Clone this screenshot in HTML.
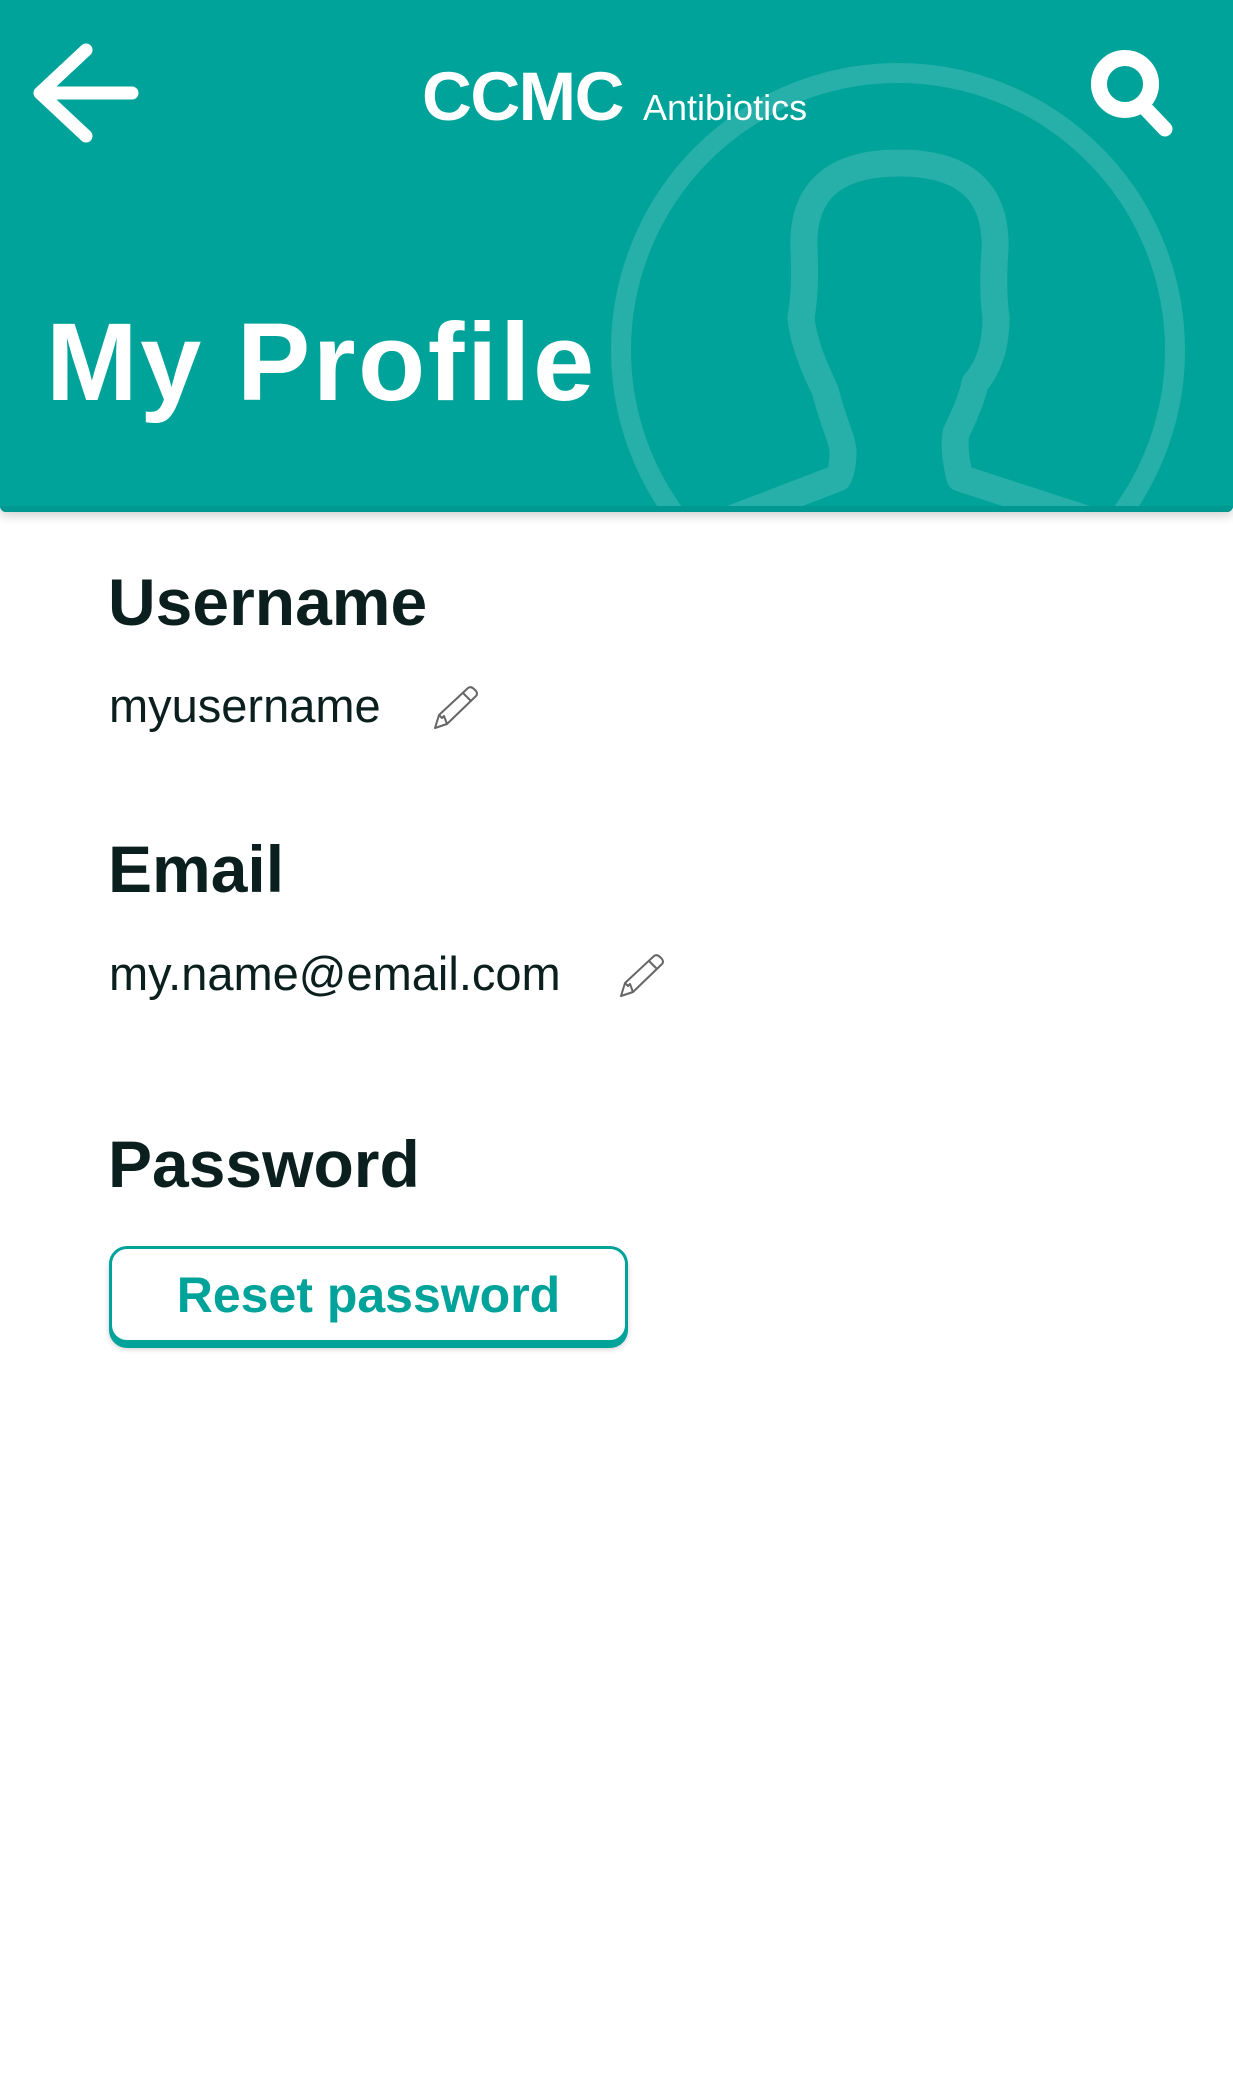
<!DOCTYPE html>
<html><head><meta charset="utf-8"><style>
html,body{margin:0;padding:0;background:#fff;width:1233px;height:2088px;overflow:hidden;font-family:"Liberation Sans",sans-serif;}
.hdr{position:absolute;left:0;top:0;width:1233px;height:512px;background:#00a39a;border-radius:0 0 6px 6px;box-shadow:0 4px 10px rgba(0,0,0,0.18);overflow:hidden;}
.hdr .strip{position:absolute;left:0;right:0;bottom:0;height:6px;background:#009890;}
.t{position:absolute;white-space:nowrap;}
.dark{color:#0b1f1f;}
</style></head><body>
<div class="hdr">
<svg width="1233" height="512" style="position:absolute;left:0;top:0">
<circle cx="898" cy="350" r="277" fill="none" stroke="rgba(255,255,255,0.15)" stroke-width="20"/>
<path d="M715 525 L838 478 Q843 470 843 450 L841 440 Q830 410 825 390 Q803 345 801 317 Q806 290 804 250 Q800 163 899 163 Q998 163 995 250 Q992 290 996 317 Q996 360 975 383 Q972 400 956 433 Q953 450 960 478 L1105 525" fill="none" stroke="rgba(255,255,255,0.15)" stroke-width="27" stroke-linejoin="round"/>
<path d="M86 50 L40 93 L86 136 M42 93 L132 93" fill="none" stroke="#fff" stroke-width="13" stroke-linecap="round" stroke-linejoin="round"/>
<circle cx="1125" cy="84" r="26" fill="none" stroke="#fff" stroke-width="16"/>
<path d="M1145 108 L1165 129" stroke="#fff" stroke-width="15" stroke-linecap="round"/>
</svg>
<div class="strip"></div>
<div class="t" style="left:422px;top:52px;font-size:69px;font-weight:bold;color:#fff;letter-spacing:-1.5px;line-height:90px">CCMC</div>
<div class="t" style="left:643px;top:84px;font-size:36px;color:#fff;line-height:48px;font-weight:300">Antibiotics</div>
<div class="t" style="left:46px;top:298px;font-size:110px;font-weight:bold;color:#fff;letter-spacing:2.5px;line-height:130px">My Profile</div>
</div>

<div class="t dark" style="left:108px;top:562px;font-size:66px;font-weight:bold;line-height:80px">Username</div>
<div class="t dark" style="left:109px;top:678px;font-size:47px;line-height:56px">myusername</div>
<svg class="t" style="left:430px;top:682px" width="50" height="50" viewBox="0 0 50 50"><path d="M5 46 L9 33 L38 6 Q41 4 44 7 L46 9 Q48 12 46 14 L17 42 Z M33 11 L41 19 M9 33 L12 36 L14 34 L17 42" fill="none" stroke="#666" stroke-width="2" stroke-linejoin="round"/></svg>

<div class="t dark" style="left:108px;top:829px;font-size:66px;font-weight:bold;line-height:80px">Email</div>
<div class="t dark" style="left:109px;top:946px;font-size:47px;line-height:56px">my.name@email.com</div>
<svg class="t" style="left:616px;top:950px" width="50" height="50" viewBox="0 0 50 50"><path d="M5 46 L9 33 L38 6 Q41 4 44 7 L46 9 Q48 12 46 14 L17 42 Z M33 11 L41 19 M9 33 L12 36 L14 34 L17 42" fill="none" stroke="#666" stroke-width="2" stroke-linejoin="round"/></svg>

<div class="t dark" style="left:108px;top:1124px;font-size:66px;font-weight:bold;line-height:80px">Password</div>
<div style="position:absolute;left:109px;top:1246px;width:519px;height:97px;box-sizing:border-box;border:3px solid #00a39a;border-radius:18px;box-shadow:0 5px 0 #00a39a,0 6px 6px rgba(0,0,0,0.2);background:#fff"></div>
<div class="t" style="left:109px;top:1262px;width:519px;text-align:center;font-size:50px;font-weight:bold;color:#00a39a;line-height:66px">Reset password</div>
</body></html>
